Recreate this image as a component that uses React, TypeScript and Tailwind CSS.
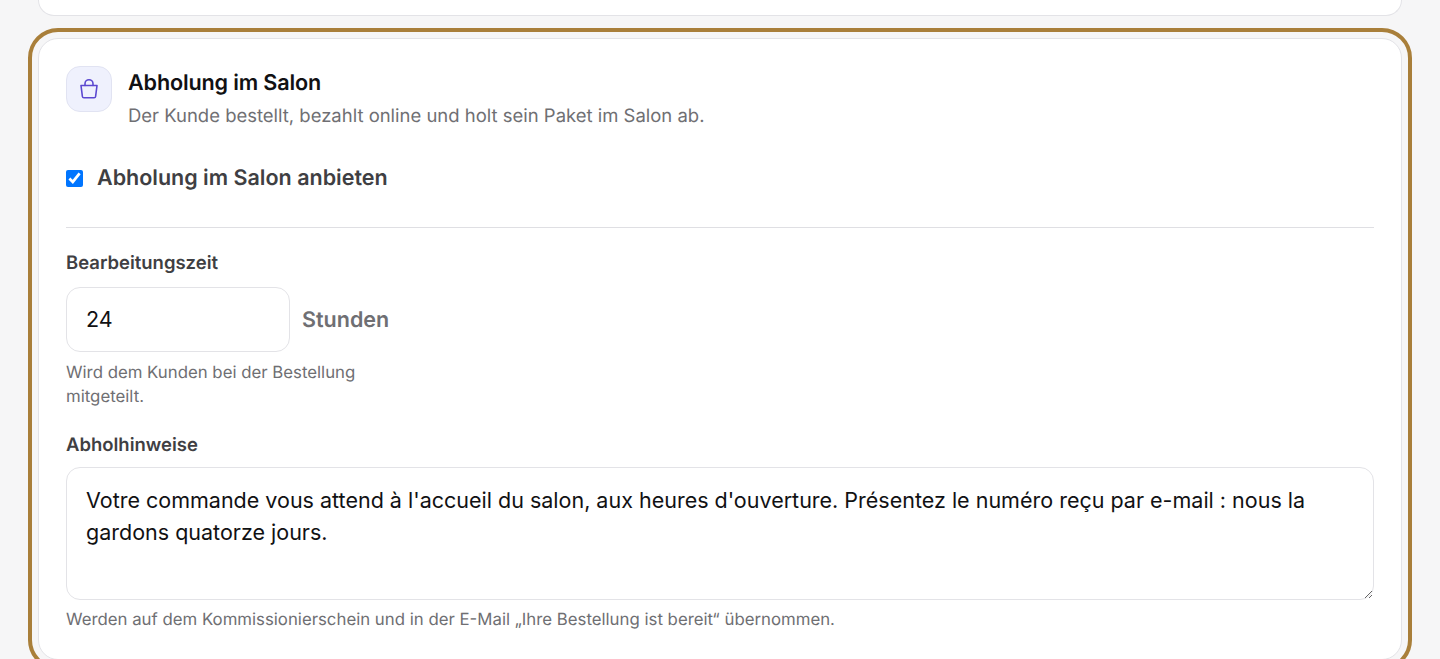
export default function App() {
  return (
    <div className="h-[659px] overflow-hidden bg-[#f6f6f7] px-[38px] font-['Inter',sans-serif] [text-rendering:geometricPrecision]">
      <div className="h-4 rounded-b-[20px] border-[1.2px] border-t-0 border-[#e3e3e7] bg-white" />

      <section className="mt-[22px] rounded-[20px] border-[1.2px] border-[#e3e3e7] bg-white p-[27px] outline-4 outline-offset-[6px] outline-[#a97f3a]">
        <div className="flex gap-4">
          <div className="flex h-[46px] w-[46px] shrink-0 items-center justify-center rounded-[14px] border-[1.2px] border-[#e1e3f2] bg-[#eff1fd]">
            <svg width="24" height="24" viewBox="0 0 24 24" fill="none" stroke="#5b48d0" strokeWidth="1.6" strokeLinecap="round" strokeLinejoin="round">
              <path d="M4 8.5h16l-1.4 11a1.5 1.5 0 0 1-1.5 1.3H6.9a1.5 1.5 0 0 1-1.5-1.3z" />
              <path d="M8 8.5V6.7a4 4 0 0 1 8 0v1.8" />
            </svg>
          </div>
          <div>
            <h2 className="text-[21.6px] leading-[34px] font-semibold tracking-[-0.15px] text-[#111113]">Abholung im Salon</h2>
            <p className="mt-[4px] text-[18.48px] leading-[24px] text-[#6f6f73]">Der Kunde bestellt, bezahlt online und holt sein Paket im Salon ab.</p>
          </div>
        </div>

        <label className="mt-[36px] flex items-center gap-[14px]">
          <input type="checkbox" defaultChecked className="h-[17px] w-[17px]" />
          <span className="text-[21.5px] leading-7 font-semibold text-[#3f3f43]">Abholung im Salon anbieten</span>
        </label>

        <hr className="mt-[35px] border-[#dfdfe3]" />

        <div className="mt-[23px]">
          <label className="block text-[18.48px] leading-[24px] font-semibold text-[#3f3f43]">Bearbeitungszeit</label>
          <div className="mt-3 flex items-center gap-3">
            <input type="text" defaultValue="24" className="h-[65px] w-[224px] rounded-[14px] border-[1.2px] border-[#e3e3e7] bg-white px-[19px] pb-[2px] text-[21.5px] text-[#111113] outline-none" />
            <span className="pt-[2px] text-[21.5px] font-semibold text-[#6f6f73]">Stunden</span>
          </div>
          <p className="mt-[9px] w-[320px] text-[16.8px] leading-6 text-[#6f6f73]">Wird dem Kunden bei der Bestellung mitgeteilt.</p>
        </div>

        <div className="mt-6">
          <label className="block text-[18.48px] leading-[24px] font-semibold text-[#3f3f43]">Abholhinweise</label>
          <textarea
            readOnly
            className="mt-[10px] block h-[133px] w-full rounded-[14px] border-[1.2px] border-[#e3e3e7] bg-white px-[19px] py-[16px] text-[21.5px] leading-[32px] text-[#111113] outline-none"
            defaultValue="Votre commande vous attend à l'accueil du salon, aux heures d'ouverture. Présentez le numéro reçu par e-mail : nous la gardons quatorze jours."
          />
          <p className="mt-2 text-[16.8px] leading-6 text-[#6f6f73]">Werden auf dem Kommissionierschein und in der E-Mail „Ihre Bestellung ist bereit“ übernommen.</p>
        </div>
      </section>
    </div>
  );
}
